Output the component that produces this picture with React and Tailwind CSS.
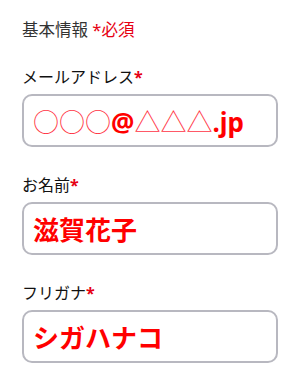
const fields = [
  { label: "メールアドレス", value: "email" },
  { label: "お名前", value: "滋賀花子" },
  { label: "フリガナ", value: "シガハナコ" },
];

const thin = "font-['Noto_Sans_CJK_JP_Light','Noto_Sans_CJK_JP',sans-serif] font-[300] text-[#ff3344]";

function Value({ value }) {
  if (value === "email") {
    return (
      <span>
        <span className={thin}>○○○</span>@<span className={thin}>△△△</span>.jp
      </span>
    );
  }
  return <span>{value}</span>;
}

export default function App() {
  return (
    <div
      className="min-h-[387px] w-[300px] bg-white px-[22px] pt-[18px] text-[#222]"
      style={{ fontFamily: '"Noto Sans", "Noto Sans CJK JP", sans-serif' }}
    >
      <h2 className="text-[16.5px] leading-6 text-[#333]">
        基本情報 <span className="text-[#e60012]">*必須</span>
      </h2>

      <div className="mt-[23px] flex flex-col gap-[26px]">
        {fields.map((f) => (
          <div key={f.label}>
            <label className="block text-[16px] font-normal leading-6 text-[#111]">
              {f.label}
              <span className="font-bold text-[#e60012]">*</span>
            </label>
            <div className="mt-[5px] flex h-[53px] w-[256px] items-center rounded-[10px] border-2 border-[#b8b8c0] px-[9px] pt-[2px] text-[26px] font-bold leading-none text-[#ff0000]">
              <Value value={f.value} />
            </div>
          </div>
        ))}
      </div>
    </div>
  );
}
